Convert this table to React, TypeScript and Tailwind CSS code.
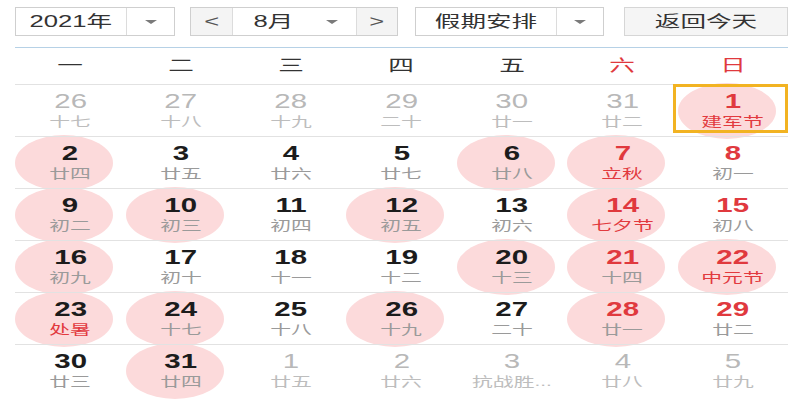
import React from "react";

type Day = {
  d: number;
  l: string;
  other?: boolean;
  fest?: boolean;
  mark?: boolean;
  today?: boolean;
};

const WEEKDAYS = ["一", "二", "三", "四", "五", "六", "日"];

const WEEKS: Day[][] = [
  [
    { d: 26, l: "十七", other: true },
    { d: 27, l: "十八", other: true },
    { d: 28, l: "十九", other: true },
    { d: 29, l: "二十", other: true },
    { d: 30, l: "廿一", other: true },
    { d: 31, l: "廿二", other: true },
    { d: 1, l: "建军节", fest: true, mark: true, today: true },
  ],
  [
    { d: 2, l: "廿四", mark: true },
    { d: 3, l: "廿五" },
    { d: 4, l: "廿六" },
    { d: 5, l: "廿七" },
    { d: 6, l: "廿八", mark: true },
    { d: 7, l: "立秋", fest: true, mark: true },
    { d: 8, l: "初一" },
  ],
  [
    { d: 9, l: "初二", mark: true },
    { d: 10, l: "初三", mark: true },
    { d: 11, l: "初四" },
    { d: 12, l: "初五", mark: true },
    { d: 13, l: "初六" },
    { d: 14, l: "七夕节", fest: true, mark: true },
    { d: 15, l: "初八" },
  ],
  [
    { d: 16, l: "初九", mark: true },
    { d: 17, l: "初十" },
    { d: 18, l: "十一" },
    { d: 19, l: "十二" },
    { d: 20, l: "十三", mark: true },
    { d: 21, l: "十四", mark: true },
    { d: 22, l: "中元节", fest: true, mark: true },
  ],
  [
    { d: 23, l: "处暑", fest: true, mark: true },
    { d: 24, l: "十七", mark: true },
    { d: 25, l: "十八" },
    { d: 26, l: "十九", mark: true },
    { d: 27, l: "二十" },
    { d: 28, l: "廿一", mark: true },
    { d: 29, l: "廿二" },
  ],
  [
    { d: 30, l: "廿三" },
    { d: 31, l: "廿四", mark: true },
    { d: 1, l: "廿五", other: true },
    { d: 2, l: "廿六", other: true },
    { d: 3, l: "抗战胜...", other: true },
    { d: 4, l: "廿八", other: true },
    { d: 5, l: "廿九", other: true },
  ],
];

const Caret = () => (
  <span className="w-0 h-0 border-x-[6px] border-t-[4px] border-x-transparent border-t-[#7a7a7a]" />
);

const Wide = ({ children, className = "" }: { children: React.ReactNode; className?: string }) => (
  <span className={`inline-block scale-x-[1.6] ${className}`}>{children}</span>
);

const Cell = ({ day, col }: { day: Day; col: number }) => {
  const weekend = col >= 5;

  let numColor = "text-[#1c1c1c] font-bold";
  if (day.other) numColor = "text-[#b8b8b8] font-normal";
  else if (weekend) numColor = "text-[#e0393e] font-bold";

  let lunarColor = "text-[#9a9a9a]";
  if (day.other) lunarColor = "text-[#bdbdbd]";
  else if (day.fest) lunarColor = "text-[#e23a3f]";

  return (
    <div className="relative flex flex-col items-center pt-[5px] h-[51px]">
      {day.mark && (
        <span className="absolute -z-10 left-1/2 top-1/2 -translate-y-1/2 -translate-x-[55px] w-[98px] h-[56px] rounded-[50%] bg-[#fcdadb]" />
      )}
      {day.today && (
        <span className="absolute -left-[5px] right-0 -top-[1px] bottom-[3px] border-[3px] border-[#f2b322]" />
      )}
      <span className={`leading-[22px] text-[21px] ${numColor}`}>
        <span className="inline-block scale-x-[1.4]">{day.d}</span>
      </span>
      <span className={`mt-[2px] leading-[16px] text-[13px] ${lunarColor}`}>
        <Wide>{day.l}</Wide>
      </span>
    </div>
  );
};

export default function App() {
  return (
    <div className="isolate relative w-[800px] h-[400px] overflow-hidden bg-white font-['Liberation_Sans','Noto_Sans_CJK_SC',sans-serif] text-[#333]">
      {/* toolbar */}
      <div className="flex items-stretch h-[29px] mt-[7px] ml-[15px] text-[16px] text-[#333]">
        <div className="flex w-[160px] border border-[#cfcfcf] bg-white">
          <div className="flex items-center justify-center w-[111px] border-r border-[#dcdcdc]">
            <Wide>2021年</Wide>
          </div>
          <div className="flex flex-1 items-center justify-center">
            <Caret />
          </div>
        </div>

        <div className="flex w-[208px] ml-[15px] border border-[#cfcfcf] bg-white">
          <div className="flex items-center justify-center w-[42px] border-r border-[#dcdcdc] bg-[#f4f4f4] text-[#555]">
            <Wide className="scale-x-[1.3]">&lt;</Wide>
          </div>
          <div className="flex flex-1 items-center">
            <div className="flex justify-center w-[80px]">
              <Wide className="scale-x-[1.5]">8月</Wide>
            </div>
            <div className="flex items-center justify-center w-[38px]">
              <Caret />
            </div>
          </div>
          <div className="flex items-center justify-center w-[41px] border-l border-[#dcdcdc] bg-[#f4f4f4] text-[#555]">
            <Wide className="scale-x-[1.3]">&gt;</Wide>
          </div>
        </div>

        <div className="flex w-[189px] ml-[17px] border border-[#cfcfcf] bg-white">
          <div className="flex items-center justify-center w-[141px] border-r border-[#dcdcdc]">
            <Wide>假期安排</Wide>
          </div>
          <div className="flex flex-1 items-center justify-center">
            <Caret />
          </div>
        </div>

        <div className="flex items-center justify-center w-[164px] ml-[20px] border border-[#d6d6d6] bg-[#f5f5f5]">
          <Wide>返回今天</Wide>
        </div>
      </div>

      {/* calendar */}
      <div className="mx-[15px] mt-[11px] w-[773px] border-t border-[#b6d1e6]">
        <div className="grid grid-cols-7 h-[37px] border-b border-[#e2e2e2]">
          {WEEKDAYS.map((w, i) => (
            <div
              key={w}
              className={`flex items-center justify-center text-[16px] ${i >= 5 ? "text-[#e0393e]" : "text-[#333]"}`}
            >
              <Wide>{w}</Wide>
            </div>
          ))}
        </div>

        {WEEKS.map((week, r) => (
          <div
            key={r}
            className={`grid grid-cols-7 ${r < WEEKS.length - 1 ? "border-b border-[#e2e2e2]" : ""}`}
          >
            {week.map((day, c) => (
              <Cell key={c} day={day} col={c} />
            ))}
          </div>
        ))}
      </div>
    </div>
  );
}
